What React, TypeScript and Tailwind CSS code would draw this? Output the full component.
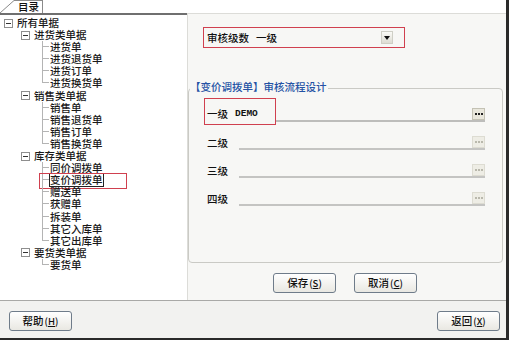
import React from "react";

type Node = { label: string; level: 0 | 1 | 2; last?: boolean; selected?: boolean };

const rows: Node[] = [
  { label: "所有单据", level: 0 },
  { label: "进货类单据", level: 1 },
  { label: "进货单", level: 2 },
  { label: "进货退货单", level: 2 },
  { label: "进货订单", level: 2 },
  { label: "进货换货单", level: 2, last: true },
  { label: "销售类单据", level: 1 },
  { label: "销售单", level: 2 },
  { label: "销售退货单", level: 2 },
  { label: "销售订单", level: 2 },
  { label: "销售换货单", level: 2, last: true },
  { label: "库存类单据", level: 1 },
  { label: "同价调拨单", level: 2 },
  { label: "变价调拨单", level: 2, selected: true },
  { label: "赠送单", level: 2 },
  { label: "获赠单", level: 2 },
  { label: "拆装单", level: 2 },
  { label: "其它入库单", level: 2 },
  { label: "其它出库单", level: 2, last: true },
  { label: "要货类单据", level: 1 },
  { label: "要货单", level: 2, last: true },
];

function MinusBox() {
  return (
    <span className="w-[9px] h-[9px] border border-[#8e8e8e] bg-white flex items-center justify-center shrink-0">
      <span className="w-[5px] h-[1px] bg-[#333]" />
    </span>
  );
}

function TreeRow({ node }: { node: Node }) {
  if (node.level === 0 || node.level === 1) {
    return (
      <div className={`h-[12.1px] flex items-center ${node.level === 0 ? "pl-[4px]" : "pl-[21px]"}`}>
        <MinusBox />
        <span className="ml-[4px] block h-[12px] leading-[12px] text-[#1a1a1a]">{node.label}</span>
      </div>
    );
  }
  return (
    <div className="h-[12.1px] flex items-stretch pl-[42px] relative">
      <div className="w-[7px] flex flex-col">
        <div className="h-[6px] border-l border-b border-[#b4b4b4]" />
        <div className={`flex-1 ${node.last ? "" : "border-l border-[#b4b4b4]"}`} />
      </div>
      <span
        className={`ml-[1px] block h-[12px] leading-[12px] text-[#1a1a1a] ${
          node.selected ? "outline outline-1 outline-[#222]" : ""
        }`}
      >
        {node.label}
      </span>
      {node.selected && (
        <div className="absolute left-[39px] -top-[1px] w-[88px] h-[16px] border border-[#d0404f]" />
      )}
    </div>
  );
}

function Dots({ enabled }: { enabled: boolean }) {
  return (
    <div
      className={`w-[13px] h-[12px] flex items-center justify-center gap-[1px] border ${
        enabled ? "bg-[#e9e7dc] border-[#c4c2b4]" : "bg-[#eeede5] border-[#dddcd2]"
      }`}
    >
      {[0, 1, 2].map((i) => (
        <span key={i} className={`w-[2px] h-[2px] ${enabled ? "bg-[#222]" : "bg-[#b9b8ac]"}`} />
      ))}
    </div>
  );
}

function Btn({ text, k }: { text: string; k: string }) {
  return (
    <div className="w-[63px] h-[20px] border border-[#6f7c8a] rounded-[3px] bg-gradient-to-b from-white to-[#e9e8e2] flex items-center justify-center text-[10.5px] text-[#111]">
      <span className="block h-[12px] leading-[12px]">{text}</span>
      <span className="ml-[1px] block h-[12px] leading-[12px] text-[9.5px]">
        (<span className="underline">{k}</span>)
      </span>
    </div>
  );
}

export default function App() {
  return (
    <div className="w-[509px] h-[340px] bg-white border-r-[3px] border-b-2 border-[#2a2a2a] flex flex-col overflow-hidden font-['Noto_Sans_CJK_SC','Liberation_Sans',sans-serif] font-medium text-[10.5px]">
      {/* tab strip */}
      <div className="h-[13px] flex items-end shrink-0">
        <svg width="14" height="13" className="shrink-0">
          <path d="M0 13 L14 0.5" stroke="#8a8a8a" strokeWidth="1" fill="none" />
        </svg>
        <div className="w-[29px] h-[13px] border-t border-r border-[#8a8a8a] pl-[4px] text-[#111]">
          <span className="block h-[12px] leading-[12px]">目录</span>
        </div>
      </div>

      {/* main */}
      <div className="flex h-[287px] shrink-0">
        {/* tree */}
        <div className="w-[187px] border-t-2 border-[#6f6f6f] bg-white pt-[2px]">
          {rows.map((r, i) => (
            <TreeRow key={i} node={r} />
          ))}
        </div>

        {/* right panel */}
        <div className="flex-1 bg-[#f7f7f5] border-l border-t border-[#dcdcd8] pt-[13px]">
          <div className="ml-[15px] w-[202px] h-[21px] border border-[#d0404f] flex items-center pl-[3px] pr-[11px] text-[#111]">
            <span className="block h-[12px] leading-[12px]">审核级数</span>
            <span className="ml-[7px] block h-[12px] leading-[12px]">一级</span>
            <div className="ml-auto w-[12px] h-[13px] border border-[#cfcfc6] bg-gradient-to-b from-[#fafaf6] to-[#dddcd3] flex items-center justify-center">
              <svg width="6" height="4">
                <polygon points="0,0 6,0 3,4" fill="#111" />
              </svg>
            </div>
          </div>

          <div className="mt-[40px] w-[315px] h-[175px] relative border border-[#cacac5] rounded-[4px] pt-[9px] pl-[15px] pr-[17px]">
            <div className="absolute left-[1px] -top-[8px] h-[12px] bg-[#f7f7f5] text-[#2452a4] leading-[12px] pr-[1px]">
              【变价调拨单】审核流程设计
            </div>

            <div className="h-[28px] flex items-start">
              <div className="w-[72px] h-[27px] border border-[#d0404f] flex items-start pt-[9px] pl-[2px] text-[#111]">
                <span className="block h-[12px] leading-[12px]">一级</span>
                <span className="ml-[7px] block h-[12px] leading-[12px] font-['Liberation_Mono',monospace] font-bold text-[9.5px]">
                  DEMO
                </span>
              </div>
              <div className="flex-1 h-[24px] border-b-2 border-[#bdbdbb] flex justify-end items-end">
                <Dots enabled />
              </div>
            </div>

            {["二级", "三级", "四级"].map((l) => (
              <div key={l} className="h-[28px] flex items-start">
                <div className="w-[35px] h-[24px] pt-[11px] pl-[3px] text-[#111]">
                  <span className="block h-[12px] leading-[12px]">{l}</span>
                </div>
                <div className="flex-1 h-[24px] border-b-2 border-[#c4c4c2] flex justify-end items-end">
                  <Dots enabled={false} />
                </div>
              </div>
            ))}
          </div>

          <div className="mt-[10px] pl-[85px] flex gap-[18px]">
            <Btn text="保存" k="S" />
            <Btn text="取消" k="C" />
          </div>
        </div>
      </div>

      {/* bottom bar */}
      <div className="h-[38px] border-t border-[#a9a9a7] bg-[#f2f2f0] flex justify-between items-start pt-[10px] pl-[9px] pr-[6px]">
        <Btn text="帮助" k="H" />
        <Btn text="返回" k="X" />
      </div>
    </div>
  );
}
